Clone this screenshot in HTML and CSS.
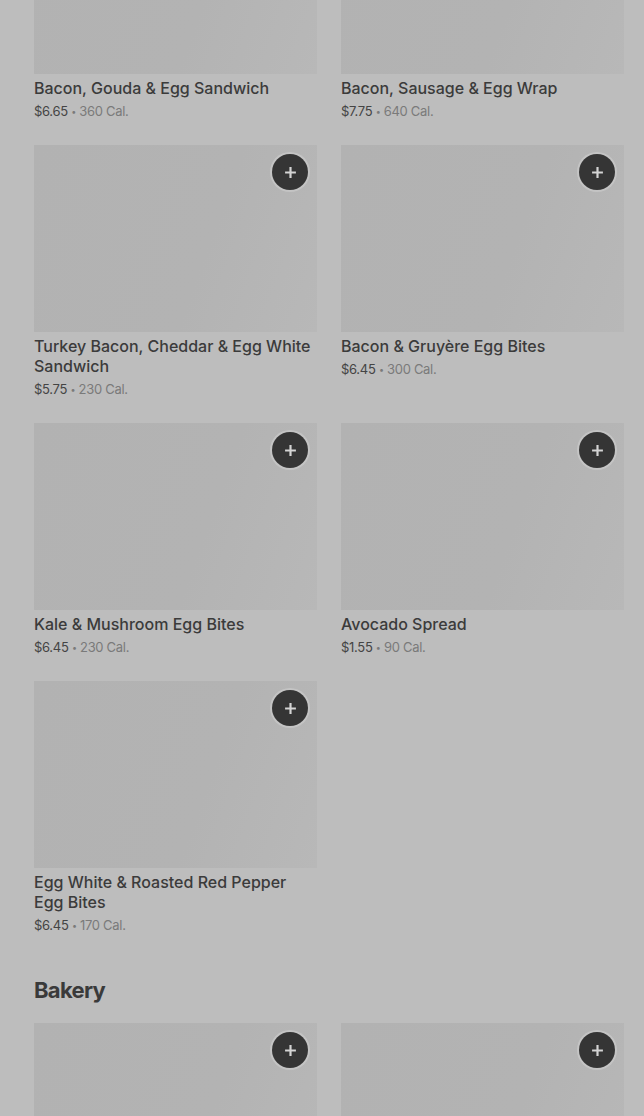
FILE: index.html
```html
<!DOCTYPE html>
<html lang="en">

<head>
   <meta charset="UTF-8">
   <title>Menu</title>
   <link rel="stylesheet" href="styles.css">
</head>

<body>
   <div class="page">
      <!-- Breakfast items -->
      <div class="grid grid-top">
         <div class="card">
            <div class="thumb"></div>
            <div class="name">Bacon, Gouda &amp; Egg Sandwich</div>
            <div class="meta">$6.65 <span class="cal"><span class="dot">•</span> 360 Cal.</span></div>
         </div>
         <div class="card">
            <div class="thumb"></div>
            <div class="name">Bacon, Sausage &amp; Egg Wrap</div>
            <div class="meta">$7.75 <span class="cal"><span class="dot">•</span> 640 Cal.</span></div>
         </div>
         <div class="card">
            <div class="thumb"><button class="add"><svg viewBox="0 0 12 12"><path d="M6 1v10M1 6h10"/></svg></button></div>
            <div class="name">Turkey Bacon, Cheddar &amp; Egg White Sandwich</div>
            <div class="meta">$5.75 <span class="cal"><span class="dot">•</span> 230 Cal.</span></div>
         </div>
         <div class="card">
            <div class="thumb"><button class="add"><svg viewBox="0 0 12 12"><path d="M6 1v10M1 6h10"/></svg></button></div>
            <div class="name">Bacon &amp; Gruyère Egg Bites</div>
            <div class="meta">$6.45 <span class="cal"><span class="dot">•</span> 300 Cal.</span></div>
         </div>
         <div class="card">
            <div class="thumb"><button class="add"><svg viewBox="0 0 12 12"><path d="M6 1v10M1 6h10"/></svg></button></div>
            <div class="name">Kale &amp; Mushroom Egg Bites</div>
            <div class="meta">$6.45 <span class="cal"><span class="dot">•</span> 230 Cal.</span></div>
         </div>
         <div class="card">
            <div class="thumb"><button class="add"><svg viewBox="0 0 12 12"><path d="M6 1v10M1 6h10"/></svg></button></div>
            <div class="name">Avocado Spread</div>
            <div class="meta">$1.55 <span class="cal"><span class="dot">•</span> 90 Cal.</span></div>
         </div>
         <div class="card">
            <div class="thumb"><button class="add"><svg viewBox="0 0 12 12"><path d="M6 1v10M1 6h10"/></svg></button></div>
            <div class="name">Egg White &amp; Roasted Red Pepper Egg Bites</div>
            <div class="meta">$6.45 <span class="cal"><span class="dot">•</span> 170 Cal.</span></div>
         </div>
      </div>

      <!-- Bakery -->
      <h2 class="section">Bakery</h2>
      <div class="grid">
         <div class="card">
            <div class="thumb"><button class="add"><svg viewBox="0 0 12 12"><path d="M6 1v10M1 6h10"/></svg></button></div>
         </div>
         <div class="card">
            <div class="thumb"><button class="add"><svg viewBox="0 0 12 12"><path d="M6 1v10M1 6h10"/></svg></button></div>
         </div>
      </div>
   </div>
</body>

</html>
```

FILE: styles.css
```css
/* Page */
body {
   margin: 0;
   background-color: #bdbdbd;
   font-family: Inter, "Noto Sans", sans-serif;
   color: #3b3b3b;
   overflow: hidden;
}

.page {
   padding: 0 20px 0 34px;
}

/* Item grid */
.grid {
   display: grid;
   grid-template-columns: 283px 283px;
   column-gap: 24px;
   row-gap: 25px;
}

.grid-top {
   margin-top: -113px;
}

.thumb {
   position: relative;
   height: 187px;
   background: linear-gradient(110deg, #b2b2b2 0%, #b3b3b3 60%, #b8b8b8 100%);
}

/* Add button */
.add {
   position: absolute;
   top: 9px;
   right: 9px;
   width: 36px;
   height: 36px;
   border: none;
   border-radius: 50%;
   background-color: #353535;
   padding: 0;
   display: flex;
   align-items: center;
   justify-content: center;
   box-shadow: 0 0 0 2px #c4c4c4;
}

.add svg {
   width: 13px;
   height: 13px;
   stroke: #d4d4d4;
   stroke-width: 2;
   fill: none;
}

/* Item text */
.name {
   margin-top: 4px;
   font-size: 16px;
   font-weight: 500;
   line-height: 20px;
   color: #3b3b3b;
}

.meta {
   margin-top: 4px;
   height: 18px;
   font-size: 13px;
   line-height: 18px;
   letter-spacing: -0.3px;
   color: #444;
}

.cal {
   color: #7a7a7a;
}

.dot {
   font-size: 9px;
   line-height: 0;
   position: relative;
   top: -1px;
}

/* Section heading */
.section {
   margin: 40px 0 17px;
   font-size: 22px;
   line-height: 32px;
   font-weight: 700;
   letter-spacing: -0.7px;
   color: #3a3a3a;
}
```
